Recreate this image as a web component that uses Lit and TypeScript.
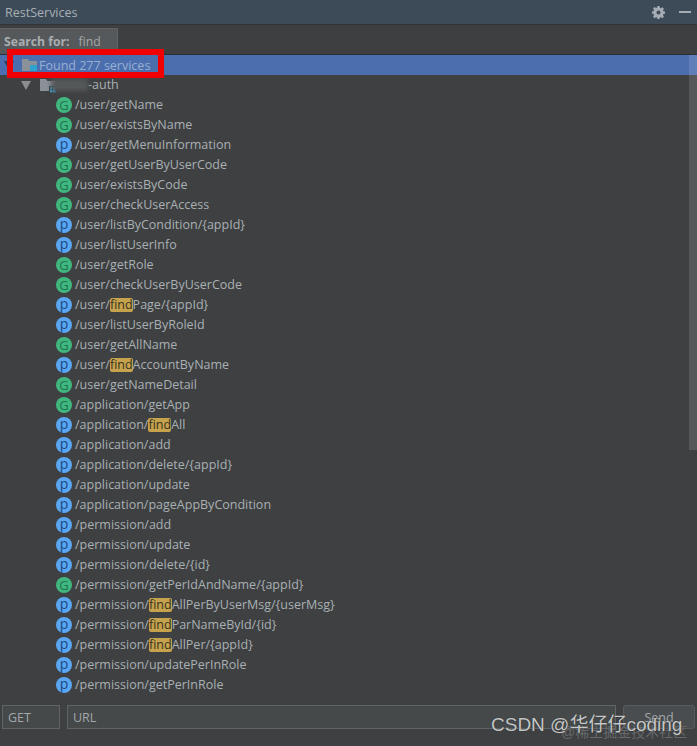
import { LitElement, html, css, svg } from "lit";
import { customElement } from "lit/decorators.js";

type Row = [string, string];
const rows: Row[] = [
  ["G", "/user/getName"], ["G", "/user/existsByName"], ["p", "/user/getMenuInformation"],
  ["G", "/user/getUserByUserCode"], ["G", "/user/existsByCode"], ["G", "/user/checkUserAccess"],
  ["p", "/user/listByCondition/{appId}"], ["p", "/user/listUserInfo"], ["G", "/user/getRole"],
  ["G", "/user/checkUserByUserCode"], ["p", "/user/findPage/{appId}"], ["p", "/user/listUserByRoleId"],
  ["G", "/user/getAllName"], ["p", "/user/findAccountByName"], ["G", "/user/getNameDetail"],
  ["G", "/application/getApp"], ["p", "/application/findAll"], ["p", "/application/add"],
  ["p", "/application/delete/{appId}"], ["p", "/application/update"], ["p", "/application/pageAppByCondition"],
  ["p", "/permission/add"], ["p", "/permission/update"], ["p", "/permission/delete/{id}"],
  ["G", "/permission/getPerIdAndName/{appId}"], ["p", "/permission/findAllPerByUserMsg/{userMsg}"],
  ["p", "/permission/findParNameById/{id}"], ["p", "/permission/findAllPer/{appId}"],
  ["p", "/permission/updatePerInRole"], ["p", "/permission/getPerInRole"],
];

const gear = svg`<svg class="gear" width="13" height="13" viewBox="0 0 14 14"><path fill="#a4abb3" fill-rule="evenodd" d="M5.8 0h2.4l.3 1.9 1.1.5 1.6-1.1 1.7 1.7-1.1 1.6.5 1.1 1.9.3v2.4l-1.9.3-.5 1.1 1.1 1.6-1.7 1.7-1.6-1.1-1.1.5-.3 1.9H5.8l-.3-1.9-1.1-.5-1.6 1.1-1.7-1.7 1.1-1.6-.5-1.1L0 8.2V5.8l1.7-.3.5-1.1-1.1-1.6 1.7-1.7 1.6 1.1 1.1-.5zM7 4.8a2.2 2.2 0 1 0 0 4.4 2.2 2.2 0 0 0 0-4.4z"/></svg>`;

const folder = (modDot: boolean) => svg`<svg width="18" height="16" viewBox="0 0 18 16">
  <path fill="#8a9199" d="M1 2h6l1.5 2H16v10H1z"/>
  ${modDot
    ? svg`<rect x="10" y="9" width="7" height="7" fill="#3c3f41"/><g fill="#3d9fd0"><rect x="11" y="10" width="2.4" height="2.4"/><rect x="14" y="10" width="2.4" height="2.4"/><rect x="11" y="13" width="2.4" height="2.4"/><rect x="14" y="13" width="2.4" height="2.4"/></g>`
    : svg`<rect x="9" y="8" width="7" height="6" fill="#2fa3cf"/>`}
</svg>`;

@customElement("app-root")
export class AppRoot extends LitElement {
  static styles = css`
    :host {
      display: flex;
      flex-direction: column;
      position: relative;
      width: 697px;
      height: 746px;
      overflow: hidden;
      background: #3e4042;
      color: #a9b0b3;
      font-family: "Open Sans", sans-serif;
      font-size: 12.5px;
    }
    .title {
      height: 24px;
      flex: none;
      display: flex;
      align-items: center;
      background: #3d4b59;
      border-bottom: 1px solid #323335;
      padding: 0 0 0 5px;
      color: #a8afb5;
      font-size: 12.5px;
    }
    .title .name { flex: 1; }
    .gear { margin-right: 14px; }
    .minimize { width: 12px; height: 2px; background: #a4abb3; margin-right: 6px; }
    .search {
      height: 30px;
      flex: none;
      display: flex;
      align-items: flex-end;
      background: #3e3f41;
      border-bottom: 1px solid #2b3036;
      box-sizing: border-box;
    }
    .tab {
      width: 118px;
      height: 26px;
      box-sizing: border-box;
      background: #56595b;
      border: 1px solid #606365;
      border-left: none;
      border-bottom: none;
      display: flex;
      align-items: center;
      padding: 0 0 0 4px;
      gap: 9px;
    }
    .tab b { font-weight: 700; color: #a9aeb1; font-size: 12.2px; }
    .tab span { color: #a2a7aa; font-size: 12.2px; }
    .body { flex: 1; position: relative; display: flex; min-height: 0; }
    .tree { flex: 1; min-width: 0; }
    .row { height: 20px; display: flex; align-items: center; white-space: nowrap; }
    .sel { background: #4b6eaf; color: #9ab0d0; padding-left: 4px; }
    .arrow { width: 0; height: 0; border-left: 5px solid transparent; border-right: 5px solid transparent; border-top: 9px solid #8b8f92; }
    .sel .arrow { border-top-color: #2f3d55; margin-right: 7px; }
    .mod { padding-left: 21px; }
    .mod .arrow { margin-right: 8px; }
    .mod .blur { width: 37px; height: 12px; background: #55585a; filter: blur(2px); margin-left: -6px; }
    .text { margin-bottom: 2px; }
    .ep { padding-left: 56px; gap: 3px; color: #a9b0b3; }
    .badge {
      width: 16px; height: 16px; border-radius: 50%;
      display: flex; align-items: center; justify-content: center;
      line-height: 16px; flex: none;
    }
    .G { background: #3fb77f; color: #1f7450; font-size: 13px; }
    .p { background: #5aa6f2; color: #1a4a80; font-size: 14px; padding-bottom: 3px; box-sizing: border-box; }
    mark {
      display: inline-block;
      height: 14px;
      line-height: 14px;
      background: #c7a24d;
      color: #33321f;
      border-radius: 2px;
    }
    .scroll {
      position: absolute;
      right: 0; top: 0;
      width: 8px;
      height: 395px;
      background: rgba(255, 255, 255, 0.12);
    }
    .bottom {
      height: 51px;
      flex: none;
      display: flex;
      padding: 10px 2px 0 2px;
      box-sizing: border-box;
      gap: 7px;
    }
    .field {
      height: 24px;
      box-sizing: border-box;
      border: 1px solid #5f6466;
      background: #45494a;
      display: flex;
      align-items: center;
      padding-left: 5px;
      color: #a2a7aa;
    }
    .method { width: 58px; }
    .url { flex: 1; }
    .send {
      width: 72px;
      height: 24px;
      box-sizing: border-box;
      border: 1px solid #585c5e;
      border-radius: 3px;
      background: #4a4d4f;
      display: flex;
      align-items: center;
      justify-content: center;
      color: #a2a7aa;
    }
    .callout {
      position: absolute;
      left: 7px; top: 49px;
      width: 157px; height: 29px;
      box-sizing: border-box;
      border: 6px solid #f00000;
    }
    .wm1 {
      position: absolute; left: 491px; top: 714px;
      font-family: "Liberation Sans", "Noto Sans CJK SC", sans-serif;
      font-size: 19px; line-height: 22px;
      color: #c4c6c7;
      text-shadow: 0 0 1px #222;
      white-space: nowrap;
    }
    .wm2 {
      position: absolute; left: 561px; top: 724px;
      font-family: "Liberation Sans", "Noto Sans CJK SC", sans-serif;
      font-size: 14px; line-height: 16px;
      color: #66696b;
      white-space: nowrap;
    }
  `;

  private label(path: string) {
    const i = path.indexOf("find");
    if (i < 0) return html`<span class="text">${path}</span>`;
    return html`<span class="text">${path.slice(0, i)}<mark>find</mark>${path.slice(i + 4)}</span>`;
  }

  render() {
    return html`
      <div class="title">
        <span class="name">RestServices</span>
        ${gear}
        <span class="minimize"></span>
      </div>
      <div class="search">
        <div class="tab"><b>Search for:</b><span>find</span></div>
      </div>
      <div class="body">
        <div class="tree">
          <div class="row sel"><span class="arrow"></span>${folder(false)}<span class="label">Found 277 services</span></div>
          <div class="row mod"><span class="arrow"></span>${folder(true)}<span class="blur"></span><span class="text">-auth</span></div>
          ${rows.map(
            ([m, p]) => html`<div class="row ep"><span class="badge ${m}">${m}</span>${this.label(p)}</div>`
          )}
        </div>
        <div class="scroll"></div>
      </div>
      <div class="bottom">
        <div class="field method">GET</div>
        <div class="field url">URL</div>
        <div class="send">Send</div>
      </div>
      <div class="callout"></div>
      <div class="wm2">@稀土掘金技术社区</div>
      <div class="wm1">CSDN @华仔仔coding</div>
    `;
  }
}
